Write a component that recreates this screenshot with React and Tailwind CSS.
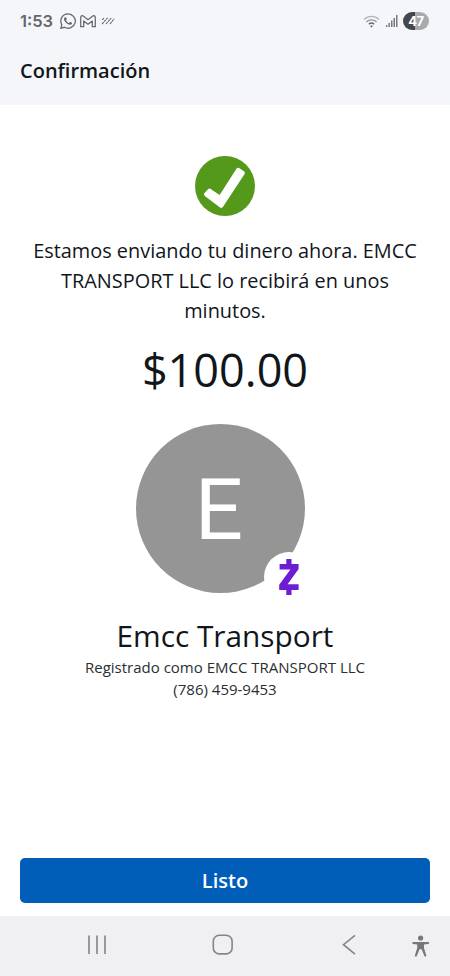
const textFont = "font-['Open_Sans','Noto_Sans',sans-serif]"

function WhatsappIcon() {
  return (
    <svg width="16" height="16" viewBox="0 0 24 24" fill="#66676b">
      <path d="M17.5 14.4c-.3-.15-1.76-.87-2.03-.97-.27-.1-.47-.15-.67.15-.2.3-.77.97-.94 1.16-.17.2-.35.22-.64.08-.3-.15-1.26-.46-2.39-1.48-.88-.79-1.48-1.76-1.65-2.06-.17-.3-.02-.46.13-.6.13-.14.3-.35.45-.53.15-.17.2-.3.3-.5.1-.2.05-.37-.03-.52-.07-.15-.67-1.61-.91-2.2-.24-.58-.49-.5-.67-.51h-.57c-.2 0-.52.07-.79.37-.27.3-1.04 1.02-1.04 2.48s1.07 2.88 1.21 3.07c.15.2 2.1 3.2 5.08 4.49 2.98 1.29 2.98.86 3.52.8.54-.05 1.76-.72 2-1.41.25-.7.25-1.29.18-1.42-.08-.12-.27-.2-.57-.35z" />
      <path d="M12 1.2a10.8 10.8 0 0 0-9.3 16.2L1.2 22.8l5.6-1.4A10.8 10.8 0 1 0 12 1.2z" fill="none" stroke="#66676b" strokeWidth="1.9" />
    </svg>
  )
}

function GmailIcon() {
  return (
    <svg width="16" height="13" viewBox="0 0 16 13" fill="none" stroke="#66676b" strokeWidth="1.25" strokeLinejoin="round">
      <path d="M.7 2.4C.7.8 2.3.3 3.5 1.2L8 4.7l4.5-3.5c1.2-.9 2.8-.4 2.8 1.2v9.3h-3V6L8 9.3 3.7 6v5.7h-3z" />
    </svg>
  )
}

function StripesIcon() {
  return (
    <svg width="14" height="8" viewBox="0 0 14 8" stroke="#66676b" strokeWidth="1.1">
      <path d="M1.2 2.9 3 1M1 7 6.6 1M5 7 10.2 1M9 7 13.2 1.6" strokeDasharray="2.6 .5" />
    </svg>
  )
}

function WifiIcon() {
  return (
    <svg width="17" height="13" viewBox="0 0 17 13" fill="none" strokeWidth="1.3">
      <path d="M1 4.4a11 11 0 0 1 15 0" stroke="#b4b5b8" />
      <path d="M3.4 7a7.4 7.4 0 0 1 10.2 0" stroke="#98999c" />
      <path d="M5.8 9.2a4 4 0 0 1 5.4 0" stroke="#66676b" />
      <circle cx="8.5" cy="11.3" r="1.1" fill="#66676b" />
    </svg>
  )
}

function SignalIcon() {
  return (
    <svg width="12" height="14" viewBox="0 0 12 14" fill="#77787b">
      <path d="M0 11h1.3v2H0zM2.4 9h1.5v4H2.4zM5 6.6h1.5V13H5zM7.5 4H9v9H7.5zM10 1h1.5v12H10z" />
    </svg>
  )
}

function StatusBar() {
  return (
    <div className="flex h-[42px] items-center justify-between pr-[21px] pl-5">
      <div className="flex items-center">
        <span className="w-[40px] font-['Inter',sans-serif] text-[16.5px] leading-none font-semibold text-[#66676b]">1:53</span>
        <WhatsappIcon />
        <span className="ml-1"><GmailIcon /></span>
        <span className="ml-[5px]"><StripesIcon /></span>
      </div>
      <div className="flex items-center">
        <WifiIcon />
        <span className="mr-[5px] ml-[6px]"><SignalIcon /></span>
        <span className="flex h-[18px] w-[26px] items-center justify-center rounded-full bg-linear-to-r from-[#46474a] from-47% to-[#a9aaad] to-47% font-['Inter',sans-serif] text-[13px] leading-none font-bold tracking-[-0.5px] text-white">47</span>
      </div>
    </div>
  )
}

function CheckBadge() {
  return (
    <svg className="mt-[51px]" width="60" height="60" viewBox="0 0 60 60">
      <circle cx="30" cy="30" r="30" fill="#55991b" />
      <path d="M9.3 37.2 13 33.2q1.3-1.2 2.7-.1l8.9 6L41.6 12.6q1.1-1.5 2.6-.5l5 3.3q1.4 1 .4 2.5L28.2 50.6q-1.4 2.2-3.5.7L9.8 40q-1.5-1.4-.5-2.8z" fill="#fff" />
    </svg>
  )
}

function Avatar({ letter }) {
  return (
    <div className="relative mt-6 mr-[9px] flex size-[169px] items-center justify-center rounded-full bg-[#959595]">
      <span className="pt-1 pr-[3px] font-['Roboto',sans-serif] text-[85px] leading-none text-white">{letter}</span>
      <div className="absolute top-[128px] left-[128px] flex size-[50px] items-center justify-center rounded-full bg-white">
        <svg width="20" height="36" viewBox="0 0 20 36" fill="#6d1ed4">
          <path d="M7.3 0h5.2v5h7.1v5L8.6 25.2h11v5.8h-7.1v5H7.3v-5H.2v-5.2l11.2-15.3H.6V5h6.7z" />
        </svg>
      </div>
    </div>
  )
}

function NavBar() {
  return (
    <nav className="flex h-[60px] items-center bg-[#f0f0f2]">
      <svg width="450" height="60" viewBox="0 0 450 60" fill="none" stroke="#858588" strokeWidth="1.6">
        <path d="M89 19.5v18.5M97 19.5v18.5M105 19.5v18.5" />
        <rect x="213.3" y="19.3" width="18.8" height="18.6" rx="6" />
        <path d="M355 19.3 343.5 28.7 355 38.2" />
        <g fill="#77777a" stroke="none">
          <circle cx="420.6" cy="22" r="2.6" />
          <path d="M413.2 26h15q1 0 1 .9t-1 1l-4.2.6v3.6l2.3 7.4q.2.8-.7 1t-1.2-.6l-2.8-6.6h-2l-2.8 6.6q-.3.8-1.2.6t-.7-1l2.3-7.4v-3.6l-4-.6q-1-.1-1-1t1-.9z" />
        </g>
      </svg>
    </nav>
  )
}

export default function App() {
  return (
    <main className={`flex h-[976px] w-[450px] flex-col bg-white text-[#11161b] ${textFont}`}>
      <header className="h-[105px] bg-[#f5f6fa]">
        <StatusBar />
        <h1 className="mt-[15px] pl-5 text-[20px] leading-7 font-semibold">Confirmación</h1>
      </header>

      <section className="flex flex-1 flex-col items-center text-center">
        <CheckBadge />
        <p className="mt-5 w-[400px] text-[19.9px] leading-[30px]">
          Estamos enviando tu dinero ahora. EMCC TRANSPORT LLC lo recibirá en unos minutos.
        </p>
        <p className="mt-[14px] text-[45px] leading-[60px]">$100.00</p>
        <Avatar letter="E" />
        <h2 className="mt-[23px] text-[29.8px] leading-10">Emcc Transport</h2>
        <p className="text-[15px] leading-[22px] text-[#2b2e32]">Registrado como EMCC TRANSPORT LLC</p>
        <p className="text-[15px] leading-[22px] text-[#2b2e32]">(786) 459-9453</p>
      </section>

      <div className="px-5 pb-[13px]">
        <button className="h-[45px] w-full rounded-[5px] bg-[#005eb8] text-[20px] font-semibold text-white">Listo</button>
      </div>
      <NavBar />
    </main>
  )
}
